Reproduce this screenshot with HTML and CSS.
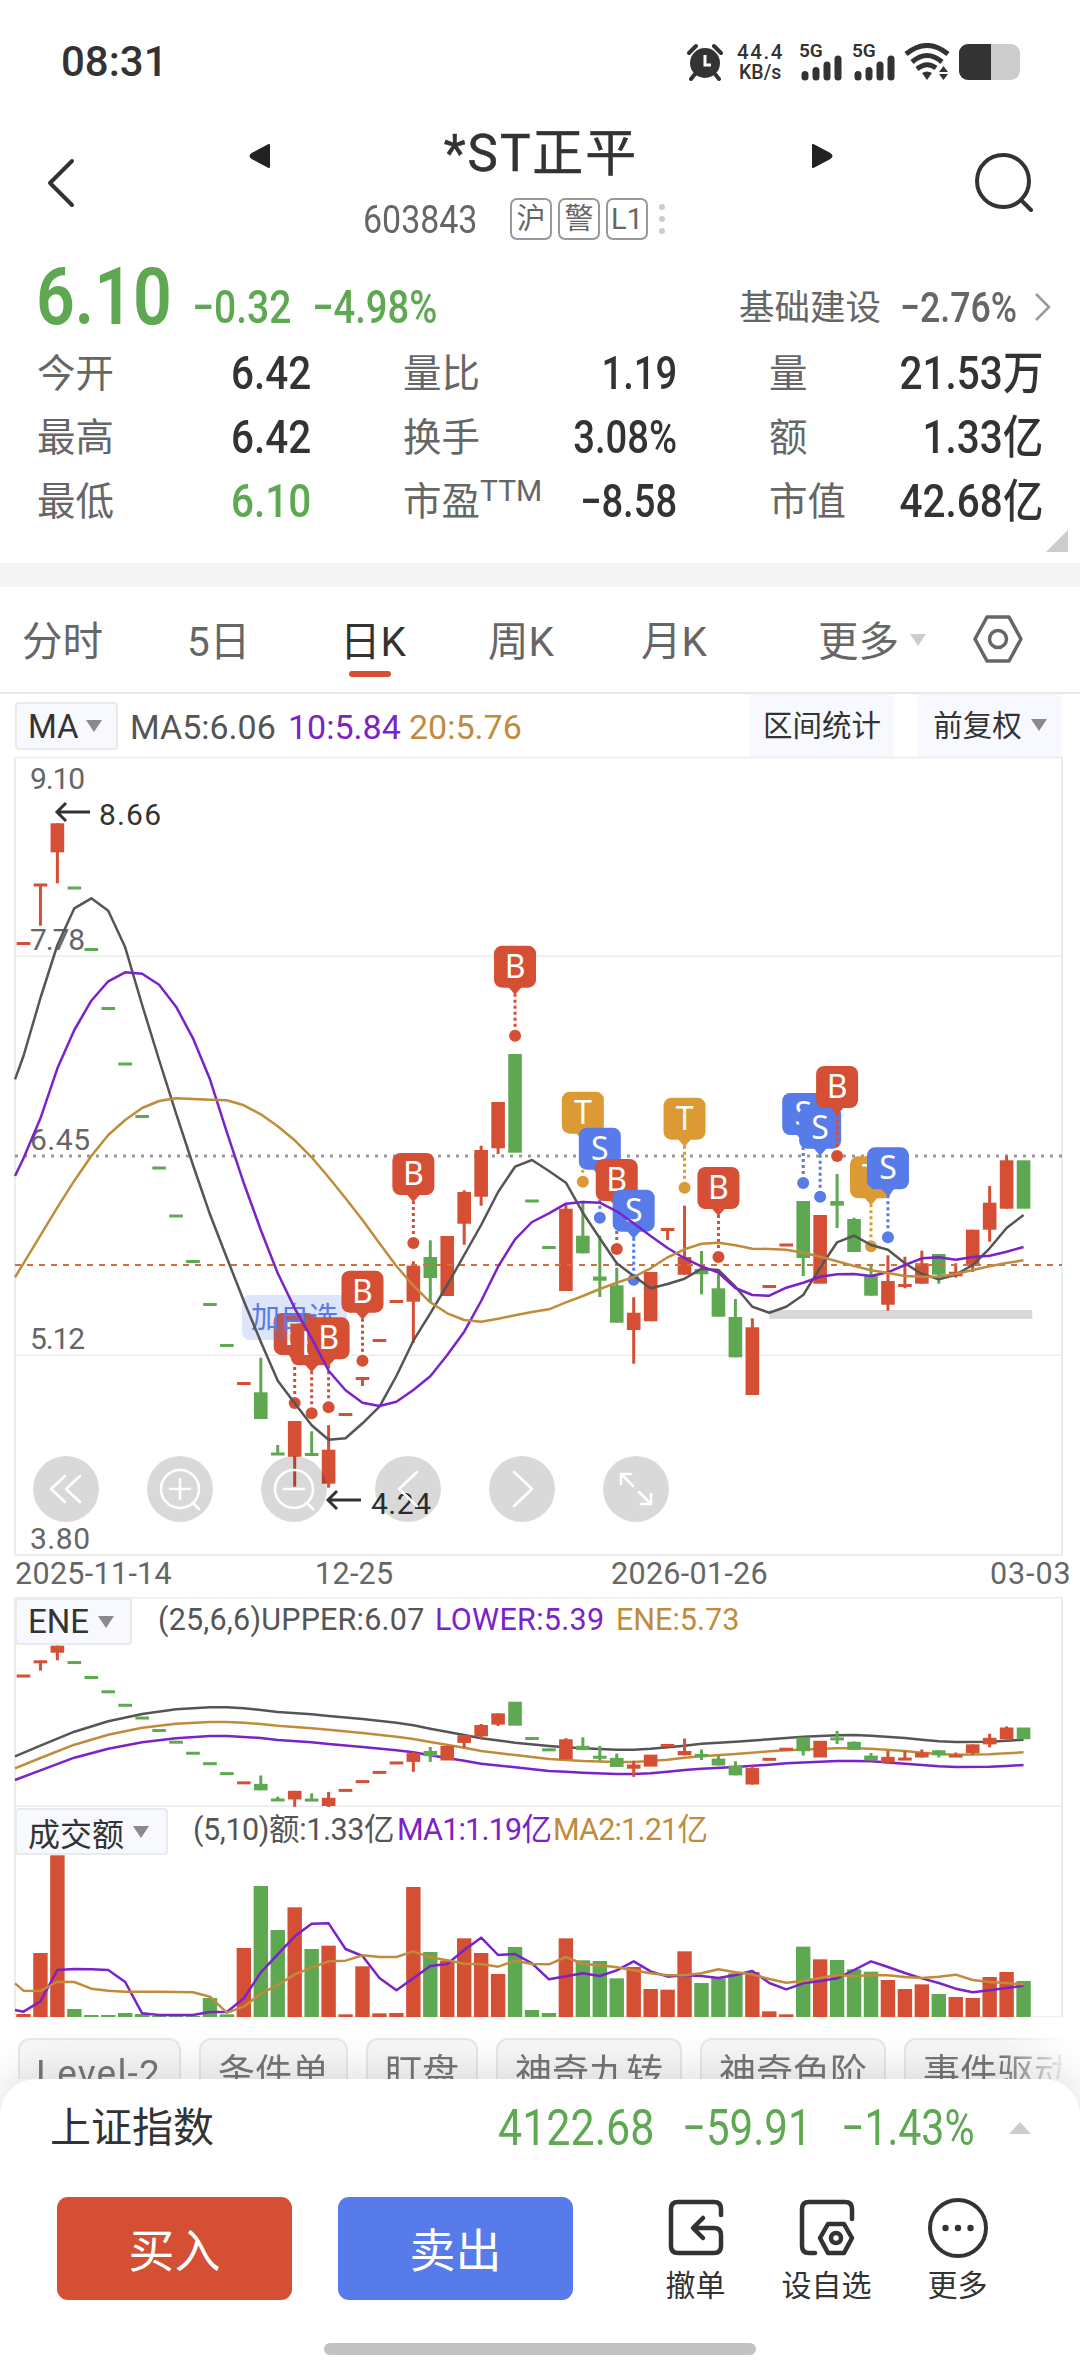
FILE: index.html
```html
<!DOCTYPE html>
<html lang="zh-CN">

<head>
    <meta charset="UTF-8">
    <meta name="viewport" content="width=device-width, initial-scale=1.0">
    <title>*ST正平 603843</title>
    <link rel="stylesheet" href="styles.css">
</head>

<body>

    <div class="status-bar">
        <span class="time">08:31</span>
        <div class="status-icons">
            <svg class="alarm" width="36" height="38" viewBox="0 0 36 38">
                <path d="M2 10 L9 3 M34 10 L27 3" stroke="#333" stroke-width="4" stroke-linecap="round" />
                <circle cx="18" cy="20" r="15" fill="#333" />
                <path d="M8 31 L4 36 M28 31 L32 36" stroke="#333" stroke-width="4" stroke-linecap="round" />
                <path d="M18 12 V22 H24" fill="none" stroke="#fff" stroke-width="3" />
            </svg>
            <div class="speed"><span>44.4</span><span>KB/s</span></div>
            <div class="signal">
                <span>5G</span>
                <svg width="43" height="26" viewBox="0 0 43 26" stroke="#333" stroke-width="7" stroke-linecap="round">
                    <path d="M6 19.5V22M17 15.5V22M28 10V22M39 4V22" />
                </svg>
            </div>
            <div class="signal">
                <span>5G</span>
                <svg width="43" height="26" viewBox="0 0 43 26" stroke="#333" stroke-width="7" stroke-linecap="round">
                    <path d="M6 19.5V22M17 15.5V22M28 10V22M39 4V22" />
                </svg>
            </div>
            <svg class="wifi" width="46" height="38" viewBox="0 0 46 38">
                <g fill="none" stroke="#333" stroke-width="5">
                    <path d="M2 11 Q23 -6 44 11" />
                    <path d="M8 19 Q23 6 38 19" />
                    <path d="M13 26 Q23 18 32 25" />
                </g>
                <path d="M18 30 Q23 27 28 30 L23 37Z M35 29 L39.500 23 L44 29Z M35 31 H44 L39.500 37Z" fill="#333" />
            </svg>
            <div class="battery"><i></i></div>
        </div>
    </div>

    <header class="stock-header">
        <svg class="back" width="30" height="50" viewBox="0 0 30 50">
            <path d="M26 3 L4 25 L26 47" fill="none" stroke="#333" stroke-width="4" stroke-linecap="round" stroke-linejoin="round" />
        </svg>
        <svg class="prev" width="22" height="26" viewBox="0 0 22 26">
            <path d="M20 2 V24 L3 15 Q0 13 3 11Z" fill="#222" stroke="#222" stroke-width="2" stroke-linejoin="round" />
        </svg>
        <div class="stock-name">
            <h1>*ST正平</h1>
            <div class="code-row">
                <span class="code">603843</span>
                <span class="tag">沪</span>
                <span class="tag">警</span>
                <span class="tag">L1</span>
                <span class="dots"><i></i><i></i><i></i></span>
            </div>
        </div>
        <svg class="next" width="22" height="26" viewBox="0 0 22 26">
            <path d="M2 2 V24 L19 15 Q22 13 19 11Z" fill="#222" stroke="#222" stroke-width="2" stroke-linejoin="round" />
        </svg>
        <svg class="search" width="60" height="60" viewBox="0 0 60 60">
            <circle cx="29" cy="29" r="26" fill="none" stroke="#333" stroke-width="4" />
            <path d="M47 48 L57 58" stroke="#333" stroke-width="4" stroke-linecap="round" />
        </svg>
    </header>

    <section class="quote">
        <div class="price-row">
            <span class="price">6.10</span>
            <span class="change">−0.32</span>
            <span class="percent">−4.98%</span>
            <span class="sector">基础建设</span>
            <span class="sector-change">−2.76%</span>
            <svg width="18" height="30" viewBox="0 0 18 30">
                <path d="M2 2 L15 15 L2 28" fill="none" stroke="#999" stroke-width="2.500" />
            </svg>
        </div>
        <div class="stats">
            <div class="stat"><span>今开</span><b>6.42</b></div>
            <div class="stat mid"><span>量比</span><b>1.19</b></div>
            <div class="stat"><span>量</span><b>21.53万</b></div>
            <div class="stat"><span>最高</span><b>6.42</b></div>
            <div class="stat mid"><span>换手</span><b>3.08%</b></div>
            <div class="stat"><span>额</span><b>1.33亿</b></div>
            <div class="stat"><span>最低</span><b class="down">6.10</b></div>
            <div class="stat mid"><span>市盈<sup>TTM</sup></span><b>−8.58</b></div>
            <div class="stat"><span>市值</span><b>42.68亿</b></div>
        </div>
        <i class="corner"></i>
    </section>

    <nav class="tabs">
        <span>分时</span>
        <span>5日</span>
        <span class="active">日K</span>
        <span>周K</span>
        <span>月K</span>
        <span class="more">更多</span>
        <i class="caret light"></i>
        <svg width="50" height="48" viewBox="0 0 50 48" fill="none" stroke="#666" stroke-width="3.500" stroke-linejoin="round">
            <path d="M14 2 H36 L48 24 L36 46 H14 L2 24Z" />
            <circle cx="25" cy="24" r="8.500" />
        </svg>
    </nav>

    <div class="ma-bar">
        <span class="select select-ma">MA<i class="caret"></i></span>
        <span class="ma ma5">MA5:6.06</span>
        <span class="ma ma10">10:5.84</span>
        <span class="ma ma20">20:5.76</span>
        <span class="tool range">区间统计</span>
        <span class="tool">前复权<i class="caret"></i></span>
    </div>

    <div class="chart-wrap">
        <svg id="kline" class="chart" width="1050" height="800" viewBox="14 756 1050 800"></svg>
        <div class="chart-controls">
            <svg viewBox="0 0 66 66"><path d="M32 20 L18 33 L32 46 M47 20 L33 33 L47 46" /></svg>
            <svg viewBox="0 0 66 66"><circle cx="33" cy="33" r="19" /><path d="M33 23V43M23 33H43M46 47L52 53" /></svg>
            <svg viewBox="0 0 66 66"><circle cx="33" cy="33" r="19" /><path d="M23 33H43M46 47L52 53" /></svg>
            <svg viewBox="0 0 66 66"><path d="M42 16 L24 33 L42 50" /></svg>
            <svg viewBox="0 0 66 66"><path d="M25 16 L43 33 L25 50" /></svg>
            <svg viewBox="0 0 66 66"><path d="M28 18H18V28M18 18L30 30M38 48H48V38M48 48L36 36" /></svg>
        </div>
    </div>

    <div class="dates">
        <span>2025-11-14</span>
        <span>12-25</span>
        <span>2026-01-26</span>
        <span>03-03</span>
    </div>

    <div class="panel">
        <div class="panel-head">
            <span class="select select-ene">ENE<i class="caret"></i></span>
            <span class="param upper">(25,6,6)UPPER:6.07</span>
            <span class="param lower">LOWER:5.39</span>
            <span class="param ene">ENE:5.73</span>
        </div>
        <svg id="ene" class="panel-chart" width="1050" height="210" viewBox="14 1597 1050 210"></svg>
    </div>

    <div class="panel">
        <div class="panel-head">
            <span class="select select-vol">成交额<i class="caret"></i></span>
            <span class="param amount">(5,10)额:1.33亿</span>
            <span class="param ma1">MA1:1.19亿</span>
            <span class="param ma2">MA2:1.21亿</span>
        </div>
        <svg id="volume" class="panel-chart" width="1050" height="211" viewBox="14 1807 1050 211"></svg>
    </div>

    <div class="chips">
        <span class="level2">Level-2</span>
        <span>条件单</span>
        <span>盯盘</span>
        <span>神奇九转</span>
        <span>神奇色阶</span>
        <span>事件驱动</span>
    </div>

    <footer class="sheet">
        <div class="index-row">
            <span class="index-name">上证指数</span>
            <span class="n1">4122.68</span>
            <span class="n2">−59.91</span>
            <span class="n3">−1.43%</span>
            <i class="caret up"></i>
        </div>
        <div class="actions">
            <button class="buy">买入</button>
            <button class="sell">卖出</button>
            <div class="action">
                <svg width="62" height="62" viewBox="0 0 62 62" fill="none" stroke="#333" stroke-width="4.500" stroke-linecap="round" stroke-linejoin="round">
                    <path d="M56 18 V12 Q56 5 49 5 H13 Q6 5 6 12 V49 Q6 56 13 56 H49 Q56 56 56 49 V38 Q56 31 49 31 H29 M38 21 L28 31 L38 41" />
                </svg>
                <span>撤单</span>
            </div>
            <div class="action">
                <svg width="62" height="62" viewBox="0 0 62 62" fill="none" stroke="#333" stroke-width="4.500" stroke-linecap="round" stroke-linejoin="round">
                    <path d="M56 22 V12 Q56 5 49 5 H13 Q6 5 6 12 V49 Q6 56 13 56 H19" />
                    <path d="M32 27 H48 L56 41 L48 56 H32 L24 41Z" />
                    <circle cx="40" cy="41" r="5" />
                </svg>
                <span>设自选</span>
            </div>
            <div class="action">
                <svg width="62" height="62" viewBox="0 0 62 62">
                    <circle cx="31" cy="31" r="28" fill="none" stroke="#333" stroke-width="4" />
                    <circle cx="18.500" cy="31" r="3.200" fill="#333" />
                    <circle cx="31" cy="31" r="3.200" fill="#333" />
                    <circle cx="43.500" cy="31" r="3.200" fill="#333" />
                </svg>
                <span>更多</span>
            </div>
        </div>
        <div class="home-bar"></div>
    </footer>

    <script src="chart.js"></script>
</body>

</html>
```
FILE: styles.css
```css
* {
    margin: 0;
    padding: 0;
    box-sizing: border-box;
}

body {
    width: 1080px;
    height: 2376px;
    overflow: hidden;
    display: flex;
    flex-direction: column;
    background: #fff;
    color: #333;
    font-family: Roboto, "Noto Sans CJK SC", sans-serif;
}

body > * {
    flex-shrink: 0;
}

i {
    font-style: normal;
}

/* status bar */
.status-bar {
    height: 100px;
    padding: 0 60px 0 61px;
    display: flex;
    justify-content: space-between;
    align-items: flex-start;
}

.time {
    margin-top: 37px;
    font-size: 42px;
    line-height: 50px;
    font-weight: 500;
}

.status-icons {
    display: flex;
    margin-top: 43px;
    height: 38px;
}

.speed {
    width: 50px;
    margin-left: 14px;
    display: flex;
    flex-direction: column;
    font-size: 20.500px;
    line-height: 19px;
    font-weight: 500;
    letter-spacing: 1.6px;
    white-space: nowrap;
}

.speed span:last-child {
    padding-left: 2px;
    font-size: 19.500px;
    letter-spacing: 0;
    line-height: 21px;
}

.signal {
    width: 43px;
    margin-left: 10px;
    display: flex;
    flex-direction: column;
}

.speed + .signal {
    margin-left: 12px;
}

.signal span {
    height: 12px;
    font-size: 19px;
    line-height: 16px;
    font-weight: 600;
}

.wifi {
    margin-left: 9px;
}

.battery {
    width: 61px;
    height: 36px;
    margin: 1px 0 0 9px;
    border-radius: 9px;
    overflow: hidden;
    background: #ccc;
}

.battery i {
    display: block;
    width: 32px;
    height: 36px;
    background: #333;
}

/* stock header */
.stock-header {
    height: 155px;
    display: flex;
    align-items: flex-start;
}

.back {
    margin: 58px 0 0 46px;
}

.prev {
    margin: 43px 0 0 173px;
}

.stock-name {
    width: 540px;
    height: 155px;
}

.stock-name h1 {
    margin-top: 18px;
    font-size: 51px;
    line-height: 72px;
    font-weight: 400;
    letter-spacing: 2px;
    text-align: center;
    -webkit-text-stroke: .5px #333;
}

.code-row {
    display: flex;
    padding-left: 92px;
    margin-top: 8px;
}

.code {
    width: 147px;
    height: 42px;
    font-size: 39px;
    line-height: 44px;
    color: #666;
    transform: scaleX(.87);
    transform-origin: left;
}

.tag {
    width: 42px;
    height: 42px;
    margin-right: 6px;
    border: 2px solid #999;
    border-radius: 7px;
    color: #666;
    font-size: 29px;
    line-height: 38px;
    text-align: center;
}

.dots {
    display: flex;
    flex-direction: column;
    gap: 6px;
    margin: 6px 0 0 5px;
}

.dots i {
    width: 6px;
    height: 6px;
    border-radius: 50%;
    background: #ccc;
}

.next {
    margin-top: 43px;
}

.search {
    margin: 52px 0 0 141px;
}

/* quote */
.quote {
    position: relative;
    height: 332px;
    border-bottom: 24px solid #f4f4f4;
}

.price-row {
    height: 87px;
    padding-left: 36px;
    display: flex;
    align-items: flex-start;
    white-space: nowrap;
}

.price-row span {
    transform-origin: left;
}

.price {
    width: 156px;
    color: #5fa852;
    font-size: 80px;
    font-weight: 600;
    line-height: 84px;
    transform: scaleX(.85);
}

.change,
.percent {
    color: #5fa852;
    font-size: 46px;
    font-weight: 500;
    line-height: 104px;
    transform: scaleX(.85);
}

.change {
    width: 120px;
}

.percent {
    width: 427px;
    transform: scaleX(.83);
}

.sector {
    width: 161px;
    color: #666;
    font-size: 35.500px;
    line-height: 107px;
}

.sector-change {
    width: 134px;
    color: #666;
    font-size: 43px;
    font-weight: 500;
    line-height: 104px;
    transform: scaleX(.83);
}

.price-row svg {
    margin-top: 37px;
}

.stats {
    padding: 0 37px;
    display: grid;
    grid-template-columns: 274px 274px 274px;
    column-gap: 92px;
    grid-auto-rows: 64px;
}

.stat {
    display: flex;
    justify-content: space-between;
    line-height: 64px;
    white-space: nowrap;
}

.stat span {
    font-size: 38.500px;
    color: #666;
}

.stat sup {
    font-size: 30px;
    line-height: 0;
    vertical-align: 14px;
}

.stat b {
    font-size: 46px;
    line-height: 62px;
    font-weight: 500;
    transform: scaleX(.88);
    transform-origin: right;
}

.stat.mid b {
    transform: scaleX(.83);
}

.stat .down {
    color: #5fa852;
}

.corner {
    position: absolute;
    right: 12px;
    bottom: 11px;
    border-left: 22px solid transparent;
    border-bottom: 22px solid #ccc;
}

/* period tabs */
.tabs {
    height: 107px;
    padding-left: 22px;
    border-bottom: 2px solid #e8e8e8;
    display: flex;
    font-size: 40.500px;
    line-height: 110px;
    color: #666;
    white-space: nowrap;
}

.tabs span {
    width: 153px;
}

.tabs span:first-child {
    width: 165px;
}

.tabs .active {
    position: relative;
    width: 148px;
    color: #333;
}

.tabs .active::after {
    content: "";
    position: absolute;
    left: 9px;
    top: 84px;
    width: 42px;
    height: 6px;
    border-radius: 3px;
    background: #d44f33;
}

.tabs .more {
    width: 92px;
    margin-left: 24px;
}

.tabs svg {
    margin: 28px 0 0 47px;
}

.caret {
    display: inline-block;
    border: 8.5px solid transparent;
    border-top: 12px solid #8a8a8a;
    border-bottom: 0;
}

.caret.light {
    margin-top: 47px;
    height: 12px;
    border-top-color: #ccc;
}

/* indicator bar */
.ma-bar {
    height: 63px;
    padding-left: 15px;
    display: flex;
    align-items: flex-start;
    white-space: nowrap;
}

.select {
    display: flex;
    align-items: center;
    gap: 9px;
    height: 48px;
    padding-left: 11px;
    border: 2px solid #e9eaec;
    border-radius: 4px;
    background: #f8f9fe;
    font-size: 33px;
}

.select-ma {
    width: 103px;
    margin-top: 8px;
}

.select-ma .caret {
    margin-left: -2px;
}

.ma {
    margin-top: 9px;
    font-size: 34px;
    line-height: 48px;
}

.ma5 {
    width: 158px;
    margin-left: 12px;
    color: #555;
}

.ma10 {
    width: 121px;
    color: #7b22c8;
}

.ma20 {
    width: 341px;
    color: #c08c3c;
}

.tool {
    width: 144px;
    height: 63px;
    background: #f8f9fe;
    font-size: 29.500px;
    line-height: 64px;
    text-align: center;
}

.range {
    margin-right: 24px;
}

.tool .caret {
    margin-left: 9px;
    vertical-align: 5px;
}

/* main chart */
.chart-wrap {
    position: relative;
    height: 799px;
    padding-left: 14px;
}

.chart {
    display: block;
    margin-top: -1px;
}

.chart-controls {
    position: absolute;
    left: 33px;
    top: 699px;
    display: flex;
    gap: 48px;
}

.chart-controls svg {
    width: 66px;
    height: 66px;
    border-radius: 50%;
    background: rgba(0, 0, 0, .15);
    fill: none;
    stroke: #fff;
    stroke-width: 2.6px;
    stroke-linecap: round;
    stroke-linejoin: round;
}

.dates {
    height: 41px;
    padding: 0 0 0 15px;
    display: flex;
    color: #666;
    font-size: 30.500px;
    line-height: 36px;
    letter-spacing: .3px;
}

.dates span:nth-child(1) {
    width: 300px;
}

.dates span:nth-child(2) {
    width: 296px;
}

.dates span:nth-child(3) {
    width: 379px;
}

.dates span:nth-child(4) {
    letter-spacing: .9px;
}

/* sub panels */
.panel {
    position: relative;
    height: 210px;
}

.panel-head {
    height: 48px;
    padding-left: 15px;
    display: flex;
    white-space: nowrap;
}

.panel-head .select {
    position: relative;
    z-index: 1;
    margin-top: 1px;
    height: 47px;
    font-size: 33px;
}

.select-ene {
    width: 117px;
}

.panel-head .select-vol {
    width: 153px;
    font-size: 32px;
}

.param {
    font-size: 30.500px;
    line-height: 46px;
}

.upper {
    width: 277px;
    margin-left: 26px;
    color: #555;
    letter-spacing: .2px;
}

.lower {
    width: 181px;
    color: #7b22c8;
    letter-spacing: .3px;
}

.ene,
.ma2 {
    color: #c08c3c;
}

.amount {
    width: 204px;
    margin-left: 25px;
    color: #555;
    letter-spacing: -.4px;
}

.ma1 {
    width: 156px;
    color: #7b22c8;
}

.ma1,
.ma2 {
    letter-spacing: -.8px;
}

.panel-chart {
    position: absolute;
    left: 14px;
    top: 0;
}

/* chips and bottom sheet */
.chips {
    height: 62px;
    padding: 21px 0 0 18px;
    width: 1062px;
    display: flex;
    gap: 18px;
    overflow: hidden;
    -webkit-mask-image: linear-gradient(90deg, #000 1000px, transparent 1070px);
    mask-image: linear-gradient(90deg, #000 1000px, transparent 1070px);
}

.chips span {
    height: 70px;
    flex-shrink: 0;
    padding: 0 17px;
    border: 2px solid #e8e8e8;
    border-radius: 12px;
    background: #f8f8f8;
    color: #777;
    font-size: 37px;
    line-height: 68px;
}

.chips .level2 {
    width: 163px;
    padding-left: 16px;
    letter-spacing: 1.2px;
}

.sheet {
    position: relative;
    height: 297px;
    border-radius: 36px 36px 0 0;
    background: #fff;
    box-shadow: 0 -4px 50px rgba(0, 0, 0, .14);
}

.index-row {
    height: 100px;
    padding-left: 50px;
    display: flex;
    line-height: 99px;
    white-space: nowrap;
}

.index-name {
    width: 448px;
    font-size: 41px;
}

.n1,
.n2,
.n3 {
    color: #5fa852;
    font-size: 50px;
    transform: scaleX(.82);
    transform-origin: left;
}

.n1 {
    width: 184px;
    transform: scaleX(.86);
}

.n2 {
    width: 159px;
    transform: scaleX(.84);
}

.n3 {
    width: 168px;
}

.caret.up {
    margin-top: 43px;
    height: 12px;
    border: 11px solid transparent;
    border-top: 0;
    border-bottom: 12px solid #ccc;
}

.actions {
    padding: 18px 0 0 57px;
    display: flex;
}

.actions button {
    width: 235px;
    height: 103px;
    margin-right: 46px;
    padding-bottom: 3px;
    border: none;
    border-radius: 11px;
    color: #fff;
    font-family: inherit;
    font-size: 46px;
}

.buy {
    background: #d44f33;
}

.sell {
    background: #577be8;
}

.actions .sell {
    margin-right: 57px;
}

.action {
    width: 131px;
    display: flex;
    flex-direction: column;
    align-items: center;
    font-size: 30px;
    line-height: 53px;
}

.home-bar {
    position: absolute;
    left: 324px;
    bottom: 21px;
    width: 432px;
    height: 12px;
    border-radius: 6px;
    background: #c2c2c2;
}
```
FILE: chart.js
```js
const RED = '#d44f33', GREEN = '#5fa852', BLUE = '#577be8', ORANGE = '#dd9934';
const GRAY = '#555', PURPLE = '#7b22c8', GOLD = '#c08c3c', GRID = '#ececec';

// one row per day: up/down, body top, body bottom, wick top, wick bottom
const candles = [
    ['r', 942, 945], ['r', 883.5, 886.5, 885, 925.7], ['r', 823.3, 852.3, 823.3, 883.3], ['g', 886.5, 889.5],
    ['g', 948, 951], ['g', 1007, 1010], ['g', 1062.5, 1065.5], ['g', 1115, 1118], ['g', 1166.5, 1169.5],
    ['g', 1214.5, 1217.5], ['g', 1260, 1263], ['g', 1303, 1306], ['g', 1344, 1347], ['r', 1382, 1385],
    ['g', 1392.3, 1419, 1357.7, 1419], ['g', 1452.5, 1455, 1445, 1455], ['r', 1421, 1456.7, 1421, 1486.7],
    ['g', 1453, 1455.5, 1431.3, 1455], ['r', 1449.7, 1483.7, 1425.3, 1487.7], ['r', 1413, 1416],
    ['r', 1377, 1380, 1378, 1386], ['r', 1339, 1342], ['r', 1300, 1303], ['r', 1265.7, 1301.7, 1261.3, 1342.7],
    ['g', 1257, 1278, 1240.3, 1301.7], ['r', 1236, 1296], ['r', 1192, 1223.7, 1190.3, 1244.7],
    ['r', 1150, 1196.7, 1145.7, 1205.7], ['r', 1102, 1148.3, 1102, 1154], ['g', 1054, 1152.7], ['g', 1199.5, 1202.5],
    ['g', 1246, 1249], ['r', 1208.7, 1291, 1204.3, 1291], ['g', 1235.7, 1253.3, 1200.7, 1253.3],
    ['g', 1276.5, 1280.7, 1235.7, 1297], ['g', 1285.3, 1322.7, 1267.7, 1322.7], ['r', 1312.7, 1330, 1297.3, 1363.7],
    ['r', 1272, 1321.3], ['r', 1228, 1231, 1229, 1240], ['r', 1257, 1274.7, 1205.7, 1274.7],
    ['g', 1269, 1274.3, 1251, 1294.3], ['g', 1288.3, 1316.7, 1274.3, 1316.7], ['g', 1317, 1357.3, 1299, 1357.3],
    ['r', 1327.3, 1395, 1318.3, 1395], ['r', 1285, 1288], ['r', 1243.5, 1246.5], ['g', 1201, 1258, 1201, 1276],
    ['r', 1215, 1283.7], ['g', 1201, 1205.7, 1174, 1228], ['g', 1219, 1252, 1217.7, 1252], ['g', 1276, 1295.7, 1265, 1295.7],
    ['r', 1281, 1304.7, 1255.3, 1310.7], ['r', 1284, 1287, 1256.7, 1288.3], ['r', 1263.3, 1283.7, 1250.7, 1283.7],
    ['g', 1254, 1274.7, 1254, 1283.7], ['r', 1271.7, 1276.3, 1263.3, 1277.7], ['r', 1229.7, 1265.7, 1229.7, 1272],
    ['r', 1202.7, 1229.7, 1186, 1241.7], ['r', 1160.3, 1208.7, 1155.7, 1208.7], ['g', 1160.3, 1208.7]
];

// moving averages, first value sits on the left edge of the chart
const ma5 = [1079.3, 1056, 998, 945, 908.3, 898.3, 910.7, 947.3, 1005, 1060, 1113.3, 1165, 1214.3, 1258, 1301, 1341.7,
    1380.7, 1403.3, 1425.3, 1439.7, 1438.3, 1423.3, 1406.7, 1376, 1340.7, 1313.3, 1285, 1255, 1225, 1192, 1166.7, 1160,
    1171, 1182.7, 1212.7, 1238.3, 1263.3, 1276, 1288.3, 1284, 1278.7, 1268.7, 1270, 1286.7, 1306.7, 1312.7, 1306.7,
    1295, 1267.7, 1242.3, 1235.7, 1245, 1249.7, 1263.3, 1274, 1279.3, 1274.7, 1265, 1248.3, 1228, 1215];
const ma10 = [1176, 1158.3, 1118.3, 1068.3, 1030, 1000.7, 981.3, 972.3, 973.7, 984.7, 1006.7, 1038.3, 1079.3, 1132.3,
    1183.3, 1230, 1273.3, 1308.3, 1338.3, 1370.7, 1390.3, 1402.7, 1406, 1401.7, 1390, 1376.3, 1355, 1331.7, 1301,
    1266.7, 1239.3, 1222, 1213.3, 1203.7, 1202, 1202.7, 1211.3, 1223.3, 1236, 1248, 1258.3, 1266.3, 1272.7, 1288,
    1295, 1295.7, 1287.7, 1282.7, 1276.7, 1274.3, 1274, 1276, 1272.3, 1265, 1258.3, 1257.3, 1259.7, 1257, 1255.7,
    1251.7, 1247];
const ma20 = [1277.3, 1263.3, 1235.3, 1207.3, 1180.7, 1156, 1135, 1120, 1108, 1101, 1098.3, 1099, 1099.7, 1100.3,
    1105.3, 1114.3, 1126.3, 1140.3, 1157.3, 1177.3, 1198.3, 1220, 1243.3, 1266, 1285.7, 1302.3, 1313.3, 1320, 1321.7,
    1318.7, 1315.3, 1312, 1309.3, 1302.3, 1296, 1289, 1282.7, 1277, 1268.3, 1257.3, 1249.3, 1243.7, 1242.7, 1245.3,
    1248.7, 1249, 1249.7, 1252.7, 1256.7, 1261.3, 1266, 1270.3, 1273, 1276, 1276.7, 1276.7, 1274, 1270, 1266.3,
    1263, 1260.3];

// trade markers: day, letter, y of the dot
const trades = [
    [16, 'B', 1403], [17, 'B', 1413.3], [18, 'B', 1407.3], [20, 'B', 1360.7], [23, 'B', 1243], [29, 'B', 1035.7],
    [33, 'T', 1181.7], [34, 'S', 1217.7], [35, 'B', 1249], [36, 'S', 1279.7], [39, 'T', 1187.7], [41, 'B', 1257],
    [46, 'S', 1183], [47, 'S', 1196.7], [48, 'B', 1156], [50, 'T', 1246.3], [51, 'S', 1237.3]
];
const tradeColor = { B: RED, S: BLUE, T: ORANGE };

// envelope lines as day:y
const eneDays = [-.5, 1, 3, 5, 7, 9, 11, 12, 13, 14, 15, 17, 18, 20, 22, 23, 24, 26, 27, 29, 31, 32, 33, 35, 36, 37, 38,
    39, 40, 42, 44, 45, 46, 48, 49, 50, 52, 53, 54, 55, 57, 58, 59];
const eneUpper = [1756.3, 1745.7, 1731.7, 1721.3, 1714, 1709.3, 1707.3, 1707.3, 1708.3, 1710, 1712, 1714.3, 1716, 1719,
    1722.7, 1725.3, 1728.7, 1735, 1738.3, 1742.7, 1746, 1747.3, 1748.3, 1749.7, 1749.7, 1748.7, 1747.3, 1745.7, 1743.7,
    1741.7, 1739.3, 1738, 1736.7, 1735.3, 1735, 1735.7, 1738, 1739.7, 1741.3, 1742, 1741.7, 1740.7, 1739.7];
const eneMid = [1768.3, 1758, 1744.7, 1734.7, 1727.7, 1723.7, 1722, 1722, 1722.7, 1724, 1725.7, 1728.3, 1729.7, 1733,
    1736.7, 1739, 1742, 1747.7, 1751, 1755, 1759, 1760, 1761, 1762, 1762, 1761, 1759.7, 1757.7, 1756.3, 1754, 1751.3,
    1750.3, 1749.5, 1748.3, 1748.3, 1748.7, 1751, 1752.7, 1754, 1754.7, 1754.3, 1753.3, 1752.3];
const eneLower = [1780, 1770.3, 1757.7, 1748.7, 1742.3, 1738.3, 1736, 1736, 1737, 1738, 1740, 1742.3, 1744, 1747,
    1750.3, 1752.3, 1755.3, 1760.7, 1763.7, 1767.3, 1771, 1771.7, 1772.7, 1774, 1774, 1773.3, 1771.7, 1770, 1768.7,
    1767, 1764.7, 1763.3, 1762.5, 1761, 1761, 1761.3, 1763.7, 1765, 1766.3, 1767, 1766.7, 1766, 1765];

// turnover, in thirds of a pixel from the panel top
const turnover = [642, 459, 166, 627, 645, 645, 639, 642, 648, 648, 648, 594, 643, 444, 258, 390, 322, 447, 437, 643,
    499, 640, 639, 261, 456, 482, 415, 459, 522, 441, 630, 639, 415, 481, 483, 535, 501, 567, 569, 454, 549, 535, 520,
    516, 634, 643, 440, 478, 480, 508, 515, 540, 567, 553, 582, 591, 594, 531, 516, 543];
const volMa1 = [630, 635, 604, 510, 507, 508, 510, 546, 640, 645, 645, 645, 636, 636, 595, 517, 463, 409, 371, 370, 447,
    468, 534, 571, 535, 498, 492, 450, 413, 465, 462, 490, 538, 529, 520, 528, 511, 484, 514, 530, 526, 528, 534, 525,
    513, 549, 568, 550, 543, 535, 510, 484, 501, 519, 535, 549, 566, 577, 571, 564, 557];
const volMa2 = [550, 572, 573, 545, 546, 566, 572, 575, 575, 575, 576, 577, 590, 638, 620, 581, 555, 523, 503, 484, 482,
    466, 471, 471, 454, 472, 481, 491, 492, 500, 482, 492, 493, 471, 492, 496, 502, 511, 520, 526, 526, 520, 508, 517,
    523, 537, 548, 543, 534, 525, 529, 525, 526, 531, 534, 530, 524, 540, 546, 549, 553];

const dayX = i => 23.5 + 16.95 * i;
const volY = v => 1800 + v / 3;

function rect(x, y, w, h, fill, rx = 0) {
    return `<rect x="${x}" y="${y}" width="${w}" height="${h}" rx="${rx}" fill="${fill}"/>`;
}

function line(x1, y1, x2, y2, stroke, width = 2, dash = '') {
    return `<line x1="${x1}" y1="${y1}" x2="${x2}" y2="${y2}" stroke="${stroke}" stroke-width="${width}" stroke-dasharray="${dash}"/>`;
}

function curve(points, color) {
    return `<polyline points="${points.map(p => p.join(',')).join(' ')}" fill="none" stroke="${color}" stroke-width="2.5" stroke-linejoin="round"/>`;
}

function daily(values, color, toY = v => v) {
    return curve(values.map((v, k) => [k ? dayX(k - 1) : 15, toY(v)]), color);
}

function text(x, y, str, color, size, length) {
    return `<text x="${x}" y="${y}" fill="${color}" font-size="${size}" textLength="${length}">${str}</text>`;
}

function drawCandles(toY) {
    return candles.map(([dir, top, bottom, high, low], i) => {
        const color = dir === 'r' ? RED : GREEN;
        const x = dayX(i);
        let out = '';
        if (high) out += line(x, toY(high), x, toY(low), color, 3);
        return out + rect(x - 6.8, toY(top), 13.6, Math.max(3, toY(bottom) - toY(top)), color);
    }).join('');
}

function marker([day, letter, y]) {
    const x = dayX(day), color = tradeColor[letter];
    return rect(x - 21, y - 90, 42, 42, color, 8)
        + `<path d="M${x - 7} ${y - 49}H${x + 7}L${x} ${y - 41}Z" fill="${color}"/>`
        + line(x, y - 42, x, y - 6, color, 3, '3 3')
        + `<circle cx="${x}" cy="${y}" r="6" fill="${color}"/>`
        + `<text x="${x}" y="${y - 58}" fill="#fff" font-family="Noto Sans" font-size="32" text-anchor="middle">${letter}</text>`;
}

function arrow(x, y) {
    return `<path d="M${x + 33} ${y}H${x}M${x + 9} ${y - 9}L${x} ${y}L${x + 9} ${y + 9}" fill="none" stroke="#333" stroke-width="3"/>`;
}

const watchlist = rect(242, 1295, 105, 45, 'rgba(87,123,232,.2)', 8) + text(251, 1328, '加自选', '#577be8', 29, 87);

document.getElementById('kline').innerHTML =
    line(15, 757.5, 1063, 757.5, GRID, 1.5) + line(15, 956.3, 1062, 956.3, GRID, 1.5)
    + line(15, 1355.3, 1062, 1355.3, GRID, 1.5) + line(15, 1555, 1063, 1555, GRID)
    + line(15, 757, 15, 1555, GRID) + line(1062, 757, 1062, 1555, GRID)
    + line(15, 1156, 1062, 1156, '#999', 3, '3 6')
    + rect(769.3, 1310, 263, 9, '#d8d8d8')
    + drawCandles(y => y)
    + line(15, 1265, 1062, 1265, '#d0703c', 2, '6 6')
    + text(30, 789, '9.10', '#666', 30, 55) + text(30, 949.5, '7.78', '#666', 30, 55)
    + text(30, 1150, '6.45', '#666', 30, 60) + text(30, 1349, '5.12', '#666', 30, 55)
    + text(30, 1549, '3.80', '#666', 30, 60)
    + arrow(57, 812) + text(99, 824.5, '8.66', '#333', 30, 62)
    + arrow(328, 1500) + text(371, 1514, '4.24', '#333', 30, 60)
    + marker(trades[0]) + watchlist + trades.slice(1).map(marker).join('')
    + daily(ma5, GRAY) + daily(ma10, PURPLE) + daily(ma20, GOLD);

// the envelope panel reuses the same candles on a flatter scale
const env = values => values.map((v, k) => [k ? dayX(eneDays[k]) : 15, v]);
document.getElementById('ene').innerHTML =
    line(15, 1597.7, 1063, 1597.7, GRID, 1.5) + line(15, 1806.5, 1063, 1806.5, GRID)
    + line(15, 1597, 15, 1807, GRID) + line(1062, 1597, 1062, 1807, GRID)
    + curve(env(eneUpper), GRAY) + curve(env(eneMid), GOLD) + curve(env(eneLower), PURPLE)
    + drawCandles(y => 1645.7 + (y - 823.3) * .2428);

document.getElementById('volume').innerHTML =
    line(15, 1807, 15, 2017, GRID) + line(1062, 1807, 1062, 2017, GRID) + line(15, 2016.7, 1063, 2016.7, GRID, 1)
    + turnover.map((v, i) => rect(dayX(i) - 7.2, volY(v), 14.4, 2017 - volY(v), candles[i][0] === 'r' ? RED : GREEN)).join('')
    + daily(volMa1, PURPLE, volY) + daily(volMa2, GOLD, volY);
```
